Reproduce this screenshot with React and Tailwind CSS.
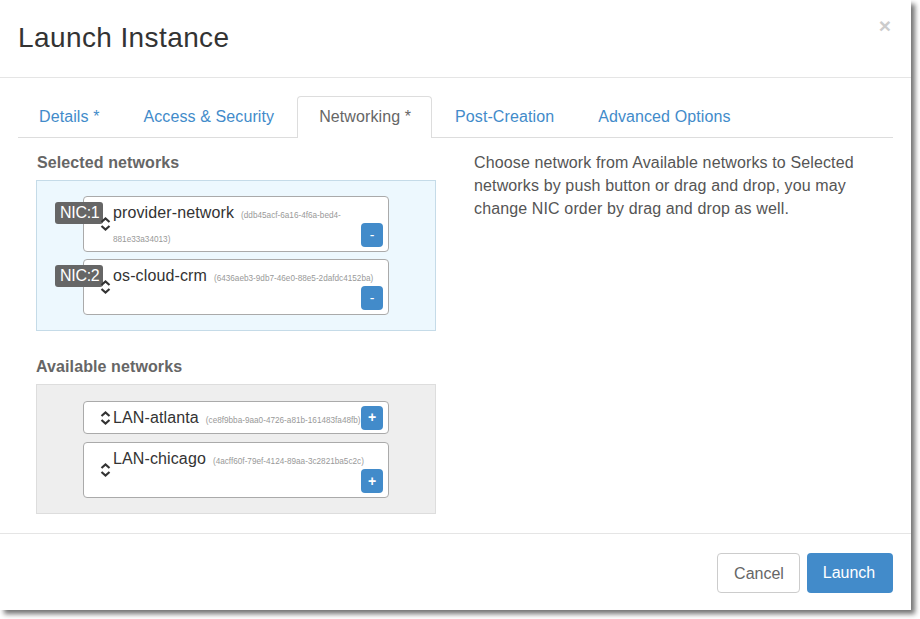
import React from "react";

function Sort({ className = "" }) {
  return (
    <svg width="11" height="14" viewBox="0 0 11 14" className={className} fill="none" stroke="#333" strokeWidth="2.2">
      <path d="M1.5 5 L5.5 1.5 L9.5 5" />
      <path d="M1.5 9 L5.5 12.5 L9.5 9" />
    </svg>
  );
}

function Name({ name, id }) {
  return (
    <>
      <span className="text-[16px] leading-[22px] tracking-[0.12px] text-[#333]">{name}</span>
      <span className="ml-[7px] text-[8.2px] leading-[22px] text-[#999]">{id}</span>
    </>
  );
}

function Btn({ label, className = "" }) {
  return (
    <span className={"flex h-[24px] w-[22px] shrink-0 items-center justify-center rounded-[4px] bg-[#428bca] text-[14px] text-white " + className}>
      {label}
    </span>
  );
}

function Selected({ nic, name, id }) {
  return (
    <div className="relative ml-[46px] flex h-[56px] w-[306px] flex-col rounded-[4px] border border-[#aaa] bg-white pl-[29px] pr-[5px]">
      <span className="absolute left-[-29px] top-[5px] w-[48px] whitespace-nowrap rounded-[3px] bg-[#666] pl-[5px] text-[16px] leading-[22px] tracking-[-0.3px] text-white">{nic}</span>
      <Sort className="absolute left-[16px] top-[20px]" />
      <div className="h-[26px] pt-[5px]">
        <div className="leading-[22px]">
          <Name name={name} id={id[0]} />
        </div>
        {id[1] ? <div className="mt-[7px] text-[8.2px] leading-[11px] text-[#999]">{id[1]}</div> : null}
      </div>
      <Btn label="-" className="mt-auto mb-[4px] self-end" />
    </div>
  );
}

export default function App() {
  return (
    <div className="h-[619px] w-[920px] overflow-hidden bg-white font-['Liberation_Sans',Arial,sans-serif] text-[#666]">
      <div className="flex h-[610px] w-[911px] flex-col bg-white shadow-[4px_4px_5px_rgba(0,0,0,0.55)]">
        <header className="flex h-[78px] items-start justify-between border-b border-[#e5e5e5] pl-[18px] pr-[20px]">
          <h1 className="pt-[22px] text-[28px] leading-[31px] tracking-[0.4px] text-[#333]">Launch Instance</h1>
          <span className="pt-[14px] text-[21px] font-bold leading-[23px] text-[#ccc]">×</span>
        </header>

        <div className="flex-1 px-[18px] pt-[18px]">
          <nav className="flex h-[42px] w-[875px] items-end border-b border-[#ddd] text-[16px] leading-[22px] tracking-[0.1px]">
            <a className="pl-[21px] pr-[22px] pb-[9px] text-[#428bca]">Details *</a>
            <a className="px-[22px] pb-[9px] text-[#428bca]">Access &amp; Security</a>
            <a className="mb-[-1px] ml-[1px] flex h-[42px] items-center rounded-t-[4px] border border-b-0 border-[#ddd] bg-white pl-[21px] pr-[20px] pb-[2px] text-[#666]">Networking *</a>
            <a className="ml-[1px] px-[22px] pb-[9px] text-[#428bca]">Post-Creation</a>
            <a className="px-[22px] pb-[9px] text-[#428bca]">Advanced Options</a>
          </nav>

          <div className="flex">
            <section className="ml-[18px] w-[400px]">
              <h2 className="ml-[1px] pt-[14px] text-[16px] font-bold leading-[22px] tracking-[0.1px] text-[#666]">Selected networks</h2>
              <div className="mt-[6px] flex h-[151px] flex-col gap-[7px] border border-[#c5dbe8] bg-[#edf8fe] pt-[15px]">
                <Selected nic="NIC:1" name="provider-network" id={["(ddb45acf-6a16-4f6a-bed4-", "881e33a34013)"]} />
                <Selected nic="NIC:2" name="os-cloud-crm" id={["(6436aeb3-9db7-46e0-88e5-2dafdc4152ba)"]} />
              </div>

              <h2 className="pt-[25px] text-[16px] font-bold leading-[22px] tracking-[0.1px] text-[#666]">Available networks</h2>
              <div className="mt-[6px] flex h-[130px] flex-col gap-[8px] border border-[#ddd] bg-[#eee] pt-[16px]">
                <div className="ml-[46px] flex h-[33px] w-[306px] items-center rounded-[4px] border border-[#aaa] bg-white pl-[16px] pr-[5px]">
                  <Sort className="mr-[2px] shrink-0" />
                  <div className="min-w-0 flex-1 whitespace-nowrap pt-[4px] leading-[22px]">
                    <Name name="LAN-atlanta" id="(ce8f9bba-9aa0-4726-a81b-161483fa48fb)" />
                  </div>
                  <Btn label="+" className="font-bold" />
                </div>
                <div className="relative ml-[46px] flex h-[56px] w-[306px] flex-col rounded-[4px] border border-[#aaa] bg-white pl-[29px] pr-[5px]">
                  <Sort className="absolute left-[16px] top-[20px]" />
                  <div className="h-[26px] whitespace-nowrap pt-[5px] leading-[22px]">
                    <Name name="LAN-chicago" id="(4acff60f-79ef-4124-89aa-3c2821ba5c2c)" />
                  </div>
                  <Btn label="+" className="mt-auto mb-[4px] self-end font-bold" />
                </div>
              </div>
            </section>

            <p className="ml-[38px] w-[400px] pt-[13px] text-[16px] leading-[23px] tracking-[0.13px] text-[#555]">
              Choose network from Available networks to Selected networks by push button or drag and drop, you may change NIC order by drag and drop as well.
            </p>
          </div>
        </div>

        <footer className="flex h-[77px] items-start justify-end gap-[7px] border-t border-[#e5e5e5] pr-[18px] pt-[19px] text-[16px]">
          <button className="h-[40px] w-[83px] rounded-[4px] border border-[#ccc] bg-white pl-[1px] pt-[1px] text-[#666]">Cancel</button>
          <button className="h-[40px] w-[86px] rounded-[4px] bg-[#428bca] pr-[2px] text-white">Launch</button>
        </footer>
      </div>
    </div>
  );
}
